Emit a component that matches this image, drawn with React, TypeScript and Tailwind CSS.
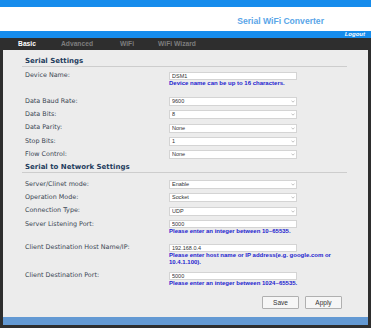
import type { ReactNode } from 'react'

const sans = "font-['Liberation_Sans',Arial,sans-serif]"
const verdana = "font-['DejaVu_Sans',Verdana,sans-serif]"

function SectionTitle({ children }: { children: ReactNode }) {
  return (
    <div
      className={`${verdana} h-[11px] border-b border-[#cdcdcd] pl-[3px] text-[7px] font-bold leading-[10px] text-[#1f3d5e]`}
    >
      {children}
    </div>
  )
}

function Row({
  label,
  children,
  h,
  className = '',
}: {
  label: string
  children: ReactNode
  h: 'select' | 'input'
  className?: string
}) {
  return (
    <div className={`flex items-start ${className}`}>
      <div
        className={`${verdana} flex w-[147px] shrink-0 items-center pl-[3px] text-[6.4px] text-[#3a4653] ${
          h === 'select' ? 'h-[9px]' : 'h-[8px]'
        }`}
      >
        {label}
      </div>
      <div className="flex-1">{children}</div>
    </div>
  )
}

function Select({ value }: { value: string }) {
  return (
    <div className="relative h-[9px] w-[128px]">
      <select
        defaultValue={value}
        className={`${sans} block h-[9px] w-full appearance-none border border-[#d4d4d4] bg-white py-0 pl-[2px] text-[5.5px] leading-[7px] text-[#333] outline-none`}
      >
        <option value={value}>{value}</option>
      </select>
      <svg
        className="pointer-events-none absolute right-[2px] top-[3px] h-[3px] w-[4px]"
        viewBox="0 0 4 3"
      >
        <path d="M0.5 0.6 L2 2.2 L3.5 0.6" stroke="#9a9a9a" strokeWidth="0.6" fill="none" />
      </svg>
    </div>
  )
}

function TextField({ value }: { value: string }) {
  return (
    <input
      defaultValue={value}
      className={`${sans} block h-[8px] w-[128px] border border-[#d4d4d4] bg-white p-0 pl-[2px] text-[5.5px] leading-[6px] text-[#333] outline-none`}
    />
  )
}

function Hint({ children }: { children: ReactNode }) {
  return (
    <p className={`${sans} text-[6px] font-bold leading-[7px] text-[#2323cf]`}>{children}</p>
  )
}

function Button({ children }: { children: ReactNode }) {
  return (
    <button
      className={`${sans} h-[13px] w-[37px] rounded-[1px] border border-[#b0b0b0] bg-[#f6f6f6] text-[6.5px] text-[#333]`}
    >
      {children}
    </button>
  )
}

export default function App() {
  const tabs = ['Basic', 'Advanced', 'WiFi', 'WiFi Wizard']

  return (
    <div className="w-[371px] bg-white">
      {/* header */}
      <div className="h-[7px] bg-[#168cec]" />
      <div className="flex h-[24px] items-center justify-end bg-white pr-[47px] pt-[4px]">
        <span className={`${sans} text-[8.6px] font-bold text-[#5aa6e8]`}>Serial WiFi Converter</span>
      </div>
      <div className="flex h-[7px] items-center justify-end bg-[#168cec] pr-[6px]">
        <span className={`${sans} text-[6px] font-bold italic leading-[7px] text-white`}>Logout</span>
      </div>
      <div className="flex h-[12px] bg-[#2e2e2e] pl-[2px]">
        {tabs.map((t, i) => (
          <div
            key={t}
            className={`${sans} w-[50px] text-center text-[6.7px] font-bold leading-[12px] ${
              i === 0 ? 'text-white' : 'text-[#7d7d7d]'
            }`}
          >
            {t}
          </div>
        ))}
      </div>

      {/* body */}
      <div className="border-x-[3px] border-b-[3px] border-[#2e2e2e] bg-[#ececec]">
        <div className="pl-[19px] pr-[21px] pt-[5.5px] pb-[8px]">
          <SectionTitle>Serial Settings</SectionTitle>

          <Row label="Device Name:" h="input" className="mt-[5.5px]">
            <TextField value="DSM1" />
            <Hint>Device name can be up to 16 characters.</Hint>
          </Row>
          <Row label="Data Baud Rate:" h="select" className="mt-[10px]">
            <Select value="9600" />
          </Row>
          <Row label="Data Bits:" h="select" className="mt-[4.3px]">
            <Select value="8" />
          </Row>
          <Row label="Data Parity:" h="select" className="mt-[4.3px]">
            <Select value="None" />
          </Row>
          <Row label="Stop Bits:" h="select" className="mt-[4.3px]">
            <Select value="1" />
          </Row>
          <Row label="Flow Control:" h="select" className="mt-[4.3px]">
            <Select value="None" />
          </Row>

          <div className="mt-[3.1px]">
            <SectionTitle>Serial to Network Settings</SectionTitle>
          </div>

          <Row label="Server/Clinet mode:" h="select" className="mt-[6.9px]">
            <Select value="Enable" />
          </Row>
          <Row label="Operation Mode:" h="select" className="mt-[4.3px]">
            <Select value="Socket" />
          </Row>
          <Row label="Connection Type:" h="select" className="mt-[4.3px]">
            <Select value="UDP" />
          </Row>
          <Row label="Server Listening Port:" h="input" className="mt-[4.6px]">
            <TextField value="5000" />
            <Hint>Please enter an integer between 10~65535.</Hint>
          </Row>
          <Row label="Client Destination Host Name/IP:" h="input" className="mt-[8.9px]">
            <TextField value="192.168.0.4" />
            <Hint>Please enter host name or IP address(e.g. google.com or 10.4.1.100).</Hint>
          </Row>
          <Row label="Client Destination Port:" h="input" className="mt-[5.7px]">
            <TextField value="5000" />
            <Hint>Please enter an integer between 1024~65535.</Hint>
          </Row>

          <div className="mt-[9px] flex justify-end gap-[6px] pr-[5px]">
            <Button>Save</Button>
            <Button>Apply</Button>
          </div>
        </div>
        <div className="h-[8px] bg-[#6399d3]" />
      </div>
    </div>
  )
}
